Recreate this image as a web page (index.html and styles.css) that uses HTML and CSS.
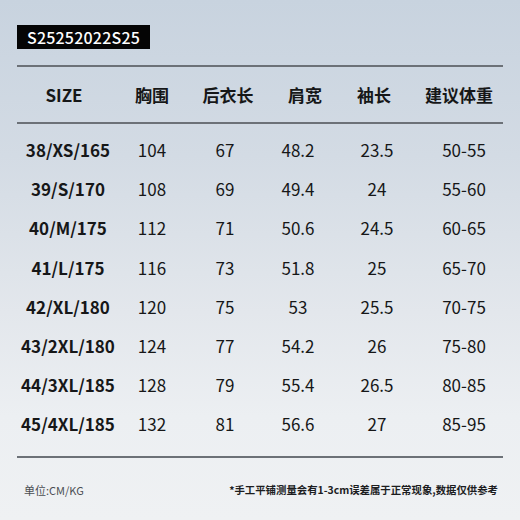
FILE: index.html
```html
<!DOCTYPE html>
<html lang="zh">
<head>
<meta charset="utf-8">
<link rel="stylesheet" href="styles.css">
</head>
<body>
<div class="page">
  <div class="tag">S25252022S25</div>
  <div class="rule rule-top"></div>
  <div class="grid head">
    <div class="c1">SIZE</div>
    <div class="c2">胸围</div>
    <div class="c3">后衣长</div>
    <div class="c4">肩宽</div>
    <div class="c5">袖长</div>
    <div class="c6">建议体重</div>
  </div>
  <div class="rule"></div>
  <div class="body-rows">
    <div class="grid row"><div class="c1">38/XS/165</div><div class="c2">104</div><div class="c3">67</div><div class="c4">48.2</div><div class="c5">23.5</div><div class="c6">50-55</div></div>
    <div class="grid row"><div class="c1">39/S/170</div><div class="c2">108</div><div class="c3">69</div><div class="c4">49.4</div><div class="c5">24</div><div class="c6">55-60</div></div>
    <div class="grid row"><div class="c1">40/M/175</div><div class="c2">112</div><div class="c3">71</div><div class="c4">50.6</div><div class="c5">24.5</div><div class="c6">60-65</div></div>
    <div class="grid row"><div class="c1">41/L/175</div><div class="c2">116</div><div class="c3">73</div><div class="c4">51.8</div><div class="c5">25</div><div class="c6">65-70</div></div>
    <div class="grid row"><div class="c1">42/XL/180</div><div class="c2">120</div><div class="c3">75</div><div class="c4">53</div><div class="c5">25.5</div><div class="c6">70-75</div></div>
    <div class="grid row"><div class="c1">43/2XL/180</div><div class="c2">124</div><div class="c3">77</div><div class="c4">54.2</div><div class="c5">26</div><div class="c6">75-80</div></div>
    <div class="grid row"><div class="c1">44/3XL/185</div><div class="c2">128</div><div class="c3">79</div><div class="c4">55.4</div><div class="c5">26.5</div><div class="c6">80-85</div></div>
    <div class="grid row"><div class="c1">45/4XL/185</div><div class="c2">132</div><div class="c3">81</div><div class="c4">56.6</div><div class="c5">27</div><div class="c6">85-95</div></div>
  </div>
  <div class="rule"></div>
  <div class="foot">
    <span class="unit">单位:CM/KG</span>
    <span class="note">*手工平铺测量会有1-3cm误差属于正常现象,数据仅供参考</span>
  </div>
</div>
</body>
</html>
```
FILE: styles.css
```css
html, body {
  margin: 0;
  padding: 0;
}
body {
  width: 520px;
  height: 520px;
  overflow: hidden;
  font-family: "Noto Sans CJK SC", "Noto Sans", sans-serif;
  color: #161718;
  background: linear-gradient(180deg, #c8d3df 0%, #d3dbe4 30%, #e3e7ec 60%, #eceff2 80%, #eff1f3 100%);
}
.page {
  padding: 25px 17px 0 17px;
  display: flex;
  flex-direction: column;
}
.tag {
  align-self: flex-start;
  background: #050505;
  color: #ffffff;
  font-size: 16px;
  font-weight: 500;
  height: 24px;
  line-height: 24px;
  width: 133px;
  text-align: center;
  letter-spacing: 0.2px;
}
.rule {
  height: 2px;
  background: #6c7177;
}
.rule-top {
  margin-top: 16px;
}
.grid {
  display: grid;
  grid-template-columns: 98px 74px 72px 74px 84px 84px;
  align-items: center;
  text-align: center;
}
.head {
  height: 55px;
  font-size: 17px;
  font-weight: 700;
}
.head .c1 { padding-right: 4px; }
.head .c3 { padding-left: 6px; }
.head .c4 { padding-left: 14px; }
.head .c5 { padding-right: 6px; }
.head .c6 { padding-right: 4px; }
.body-rows {
  padding: 6px 0 12px 0;
}
.row {
  height: 39.2px;
  font-size: 17px;
  font-weight: 400;
}
.row .c1 {
  font-weight: 700;
  padding-left: 4px;
}
.row .c6 { padding-left: 6px; }
.foot {
  display: flex;
  justify-content: space-between;
  align-items: center;
  height: 64px;
  padding: 0 5px 0 7px;
}
.unit {
  font-size: 11px;
  color: #4a4d52;
}
.note {
  font-size: 10.4px;
  font-weight: 700;
  color: #1c1d1f;
}
```
